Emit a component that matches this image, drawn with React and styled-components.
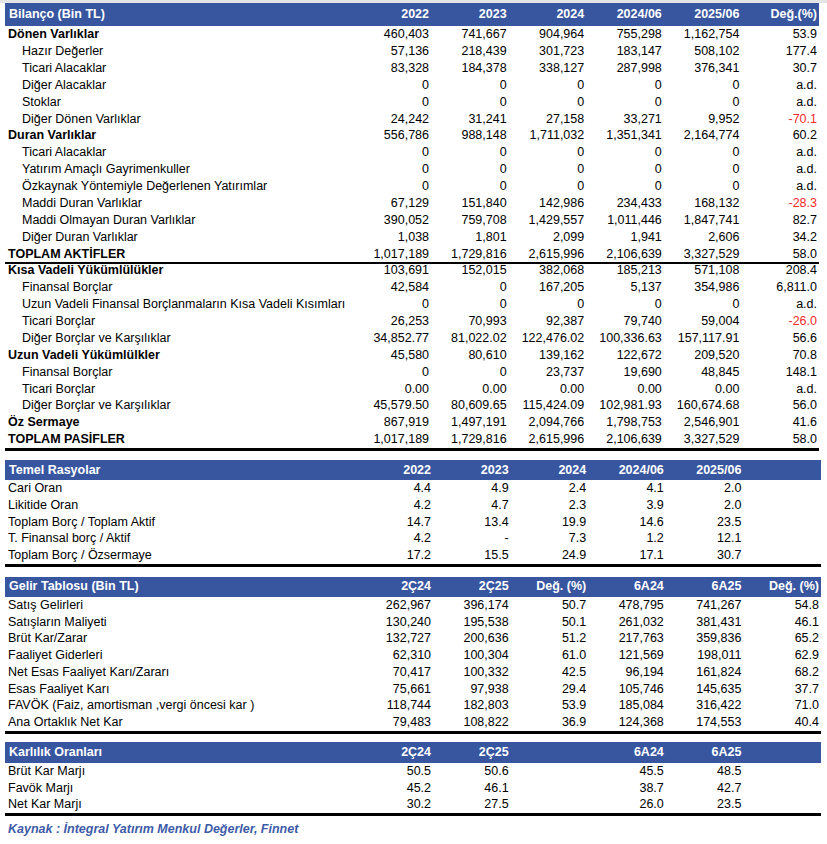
import React from "react";
import styled, { createGlobalStyle } from "styled-components";

const Global = createGlobalStyle`
  html, body { margin: 0; padding: 0; background: #ffffff; }
  body { font-family: "Liberation Sans", Arial, sans-serif; color: #000; }
`;

const BLUE = "#38569f";

const Page = styled.div`
  width: 827px;
  display: flex;
  flex-direction: column;
`;

const TopBand = styled.div`
  height: 3px;
  background: #e4e4e4;
`;

const Section = styled.section`
  margin: ${(p) => p.$mt}px 0 0 5px;
  width: ${(p) => p.$w}px;
  display: flex;
  flex-direction: column;
`;

const RowGrid = styled.div`
  display: grid;
  grid-template-columns: 1fr repeat(6, 77.6px);
  align-items: center;
  box-sizing: content-box;
  height: ${(p) => p.$h}px;
  font-size: 12.5px;
  line-height: 1;
  white-space: nowrap;
`;

const HeaderRow = styled(RowGrid)`
  background: ${BLUE};
  color: #ffffff;
  font-weight: bold;
`;

const Row = styled(RowGrid)`
  border-bottom: ${(p) => (p.$line ? `${p.$line}px solid #000` : "none")};
  margin-bottom: ${(p) => (p.$line ? `-${p.$line}px` : "0")};
`;

const HeadLabel = styled.div`
  padding-left: 4px;
`;

const Label = styled.div`
  padding-left: ${(p) => (p.$indent ? 17 : 3)}px;
  font-weight: ${(p) => (p.$bold ? "bold" : "normal")};
`;

const Value = styled.div`
  text-align: right;
  padding-right: 2px;
  color: ${(p) => (p.$neg ? "#f42a2a" : "inherit")};
`;

const Source = styled.div`
  margin: 8px 0 0 8px;
  font-size: 12.5px;
  line-height: 16px;
  font-weight: bold;
  font-style: italic;
  color: #3d5ba8;
`;

const bilancoHead = ["2022", "2023", "2024", "2024/06", "2025/06", "Değ.(%)"];
const bilanco = [
  ["Dönen Varlıklar", 0, ["460,403", "741,667", "904,964", "755,298", "1,162,754", "53.9"]],
  ["Hazır Değerler", 1, ["57,136", "218,439", "301,723", "183,147", "508,102", "177.4"]],
  ["Ticari Alacaklar", 1, ["83,328", "184,378", "338,127", "287,998", "376,341", "30.7"]],
  ["Diğer Alacaklar", 1, ["0", "0", "0", "0", "0", "a.d."]],
  ["Stoklar", 1, ["0", "0", "0", "0", "0", "a.d."]],
  ["Diğer Dönen Varlıklar", 1, ["24,242", "31,241", "27,158", "33,271", "9,952", "-70.1"]],
  ["Duran Varlıklar", 0, ["556,786", "988,148", "1,711,032", "1,351,341", "2,164,774", "60.2"]],
  ["Ticari Alacaklar", 1, ["0", "0", "0", "0", "0", "a.d."]],
  ["Yatırım Amaçlı Gayrimenkuller", 1, ["0", "0", "0", "0", "0", "a.d."]],
  ["Özkaynak Yöntemiyle Değerlenen Yatırımlar", 1, ["0", "0", "0", "0", "0", "a.d."]],
  ["Maddi Duran Varlıklar", 1, ["67,129", "151,840", "142,986", "234,433", "168,132", "-28.3"]],
  ["Maddi Olmayan Duran Varlıklar", 1, ["390,052", "759,708", "1,429,557", "1,011,446", "1,847,741", "82.7"]],
  ["Diğer Duran Varlıklar", 1, ["1,038", "1,801", "2,099", "1,941", "2,606", "34.2"]],
  ["TOPLAM AKTİFLER", 0, ["1,017,189", "1,729,816", "2,615,996", "2,106,639", "3,327,529", "58.0"], 2],
  ["Kısa Vadeli Yükümlülükler", 0, ["103,691", "152,015", "382,068", "185,213", "571,108", "208.4"]],
  ["Finansal Borçlar", 1, ["42,584", "0", "167,205", "5,137", "354,986", "6,811.0"]],
  ["Uzun Vadeli Finansal Borçlanmaların Kısa Vadeli Kısımları", 1, ["0", "0", "0", "0", "0", "a.d."]],
  ["Ticari Borçlar", 1, ["26,253", "70,993", "92,387", "79,740", "59,004", "-26.0"]],
  ["Diğer Borçlar ve Karşılıklar", 1, ["34,852.77", "81,022.02", "122,476.02", "100,336.63", "157,117.91", "56.6"]],
  ["Uzun Vadeli Yükümlülkler", 0, ["45,580", "80,610", "139,162", "122,672", "209,520", "70.8"]],
  ["Finansal Borçlar", 1, ["0", "0", "23,737", "19,690", "48,845", "148.1"]],
  ["Ticari Borçlar", 1, ["0.00", "0.00", "0.00", "0.00", "0.00", "a.d."]],
  ["Diğer Borçlar ve Karşılıklar", 1, ["45,579.50", "80,609.65", "115,424.09", "102,981.93", "160,674.68", "56.0"]],
  ["Öz Sermaye", 0, ["867,919", "1,497,191", "2,094,766", "1,798,753", "2,546,901", "41.6"]],
  ["TOPLAM PASİFLER", 0, ["1,017,189", "1,729,816", "2,615,996", "2,106,639", "3,327,529", "58.0"], 3],
];

const rasyoHead = ["2022", "2023", "2024", "2024/06", "2025/06", ""];
const rasyo = [
  ["Cari Oran", ["4.4", "4.9", "2.4", "4.1", "2.0", ""]],
  ["Likitide Oran", ["4.2", "4.7", "2.3", "3.9", "2.0", ""]],
  ["Toplam Borç / Toplam Aktif", ["14.7", "13.4", "19.9", "14.6", "23.5", ""]],
  ["T. Finansal borç / Aktif", ["4.2", "-", "7.3", "1.2", "12.1", ""]],
  ["Toplam Borç / Özsermaye", ["17.2", "15.5", "24.9", "17.1", "30.7", ""]],
];

const gelirHead = ["2Ç24", "2Ç25", "Değ. (%)", "6A24", "6A25", "Değ. (%)"];
const gelir = [
  ["Satış Gelirleri", ["262,967", "396,174", "50.7", "478,795", "741,267", "54.8"]],
  ["Satışların Maliyeti", ["130,240", "195,538", "50.1", "261,032", "381,431", "46.1"]],
  ["Brüt Kar/Zarar", ["132,727", "200,636", "51.2", "217,763", "359,836", "65.2"]],
  ["Faaliyet Giderleri", ["62,310", "100,304", "61.0", "121,569", "198,011", "62.9"]],
  ["Net Esas Faaliyet Karı/Zararı", ["70,417", "100,332", "42.5", "96,194", "161,824", "68.2"]],
  ["Esas Faaliyet Karı", ["75,661", "97,938", "29.4", "105,746", "145,635", "37.7"]],
  ["FAVÖK (Faiz, amortisman ,vergi öncesi kar )", ["118,744", "182,803", "53.9", "185,084", "316,422", "71.0"]],
  ["Ana Ortaklık Net Kar", ["79,483", "108,822", "36.9", "124,368", "174,553", "40.4"]],
];

const karHead = ["2Ç24", "2Ç25", "", "6A24", "6A25", ""];
const kar = [
  ["Brüt Kar Marjı", ["50.5", "50.6", "", "45.5", "48.5", ""]],
  ["Favök Marjı", ["45.2", "46.1", "", "38.7", "42.7", ""]],
  ["Net Kar Marjı", ["30.2", "27.5", "", "26.0", "23.5", ""]],
];

const isNeg = (v) => v.startsWith("-") && v.length > 1;

function Header({ title, cols, h }) {
  return (
    <HeaderRow $h={h}>
      <HeadLabel>{title}</HeadLabel>
      {cols.map((c, i) => (
        <Value key={i}>{c}</Value>
      ))}
    </HeaderRow>
  );
}

function SimpleTable({ title, cols, rows, mt, headH }) {
  return (
    <Section $mt={mt} $w={816}>
      <Header title={title} cols={cols} h={headH} />
      {rows.map(([label, vals], i) => (
        <Row key={i} $h={16.75} $line={i === rows.length - 1 ? 3 : 0}>
          <Label>{label}</Label>
          {vals.map((v, j) => (
            <Value key={j} $neg={isNeg(v)}>{v}</Value>
          ))}
        </Row>
      ))}
    </Section>
  );
}

export default function App() {
  return (
    <Page>
      <Global />
      <TopBand />
      <Section $mt={0} $w={814}>
        <Header title="Bilanço (Bin TL)" cols={bilancoHead} h={23} />
        {bilanco.map(([label, indent, vals, line], i) => (
          <Row key={i} $h={16.88} $line={line || 0}>
            <Label $indent={indent} $bold={!indent}>{label}</Label>
            {vals.map((v, j) => (
              <Value key={j} $neg={isNeg(v)}>{v}</Value>
            ))}
          </Row>
        ))}
      </Section>
      <SimpleTable title="Temel Rasyolar" cols={rasyoHead} rows={rasyo} mt={12} headH={20} />
      <SimpleTable title="Gelir Tablosu (Bin TL)" cols={gelirHead} rows={gelir} mt={13} headH={20} />
      <SimpleTable title="Karlılık Oranları" cols={karHead} rows={kar} mt={11} headH={21} />
      <Source>Kaynak : İntegral Yatırım Menkul Değerler, Finnet</Source>
    </Page>
  );
}
